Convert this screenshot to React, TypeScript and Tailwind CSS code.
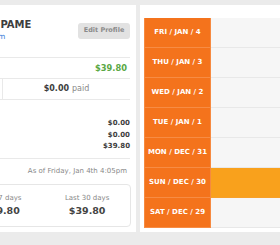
import React from "react";

const days = [
  "FRI / JAN / 4",
  "THU / JAN / 3",
  "WED / JAN / 2",
  "TUE / JAN / 1",
  "MON / DEC / 31",
  "SUN / DEC / 30",
  "SAT / DEC / 29",
];

function ProfileCard() {
  return (
    <div className="ml-[-134px] w-[270px] h-[227px] shrink-0 bg-white px-[6px] flex flex-col text-[#3d3d3d]">
      {/* Header */}
      <div className="h-[53px] flex items-start justify-between border-b border-[#e9e9e9]">
        <div className="ml-[72px] pt-[13px] flex flex-col">
          <span className="text-[10px] leading-[14px] font-bold">MARIANA PAME</span>
          <span className="text-[7.5px] leading-[10px] text-[#3b7dd8]">info@pame.com</span>
        </div>
        <button className="mt-[18px] w-[52px] h-[16px] rounded-[3px] bg-[#e2e2e2] text-[6.5px] font-bold text-[#8a8a8a]">
          Edit Profile
        </button>
      </div>

      {/* Balance */}
      <div className="h-[21px] flex items-center justify-end border-b border-[#e9e9e9] pr-[3px]">
        <span className="text-[8.3px] font-bold text-[#5aa845]">$39.80</span>
      </div>

      {/* Owed / paid */}
      <div className="h-[21px] grid grid-cols-[131px_1fr] border-b border-[#e9e9e9] text-[8px]">
        <div className="border-r border-[#e9e9e9]" />
        <div className="flex items-center justify-center">
          <span className="font-bold">$0.00</span>
          <span className="ml-[3px] text-[#888]">paid</span>
        </div>
      </div>

      {/* Totals */}
      <div className="h-[59px] border-b border-[#e9e9e9] pt-[18px] flex flex-col items-end text-[7px] leading-[11.5px] font-bold">
        <span>$0.00</span>
        <span>$0.00</span>
        <span>$39.80</span>
      </div>

      <div className="h-[25px] flex items-center justify-end pr-[3px] text-[7px] text-[#888]">
        As of Friday, Jan 4th 4:05pm
      </div>

      {/* Stats */}
      <div className="h-[43px] mr-[-1px] grid grid-cols-3 rounded-[4px] border border-[#e6e6e6]">
        <div />
        {[
          ["Last 7 days", "$39.80"],
          ["Last 30 days", "$39.80"],
        ].map(([label, value]) => (
          <div key={label} className="flex flex-col items-center justify-center">
            <span className="text-[7px] leading-[11px] text-[#888]">{label}</span>
            <span className="text-[9.5px] leading-[14px] font-bold text-[#444]">{value}</span>
          </div>
        ))}
      </div>
    </div>
  );
}

function DayList() {
  return (
    <div className="flex-1 h-[227px] bg-white pt-[13px] pl-[4px] pb-[4px] flex flex-col">
      {days.map((d) => {
        const active = d.startsWith("SUN");
        return (
          <div key={d} className="h-[30px] flex">
            <div className="w-[67px] flex items-center justify-center bg-[#f4731c] border-b border-[#f78c44] border-x border-x-[#f68a40] text-white text-[7px] font-bold">
              {d}
            </div>
            <div
              className={
                active
                  ? "flex-1 bg-[#f9a11c] border-b border-[#f7a02a]"
                  : "flex-1 bg-[#f6f6f6] border-b border-[#e8e8e8]"
              }
            />
          </div>
        );
      })}
    </div>
  );
}

export default function App() {
  return (
    <div
      className="w-[280px] h-[245px] bg-[#ebebeb] overflow-hidden pt-[5px] flex gap-[4px]"
      style={{ fontFamily: '"DejaVu Sans", Verdana, sans-serif' }}
    >
      <ProfileCard />
      <DayList />
    </div>
  );
}
